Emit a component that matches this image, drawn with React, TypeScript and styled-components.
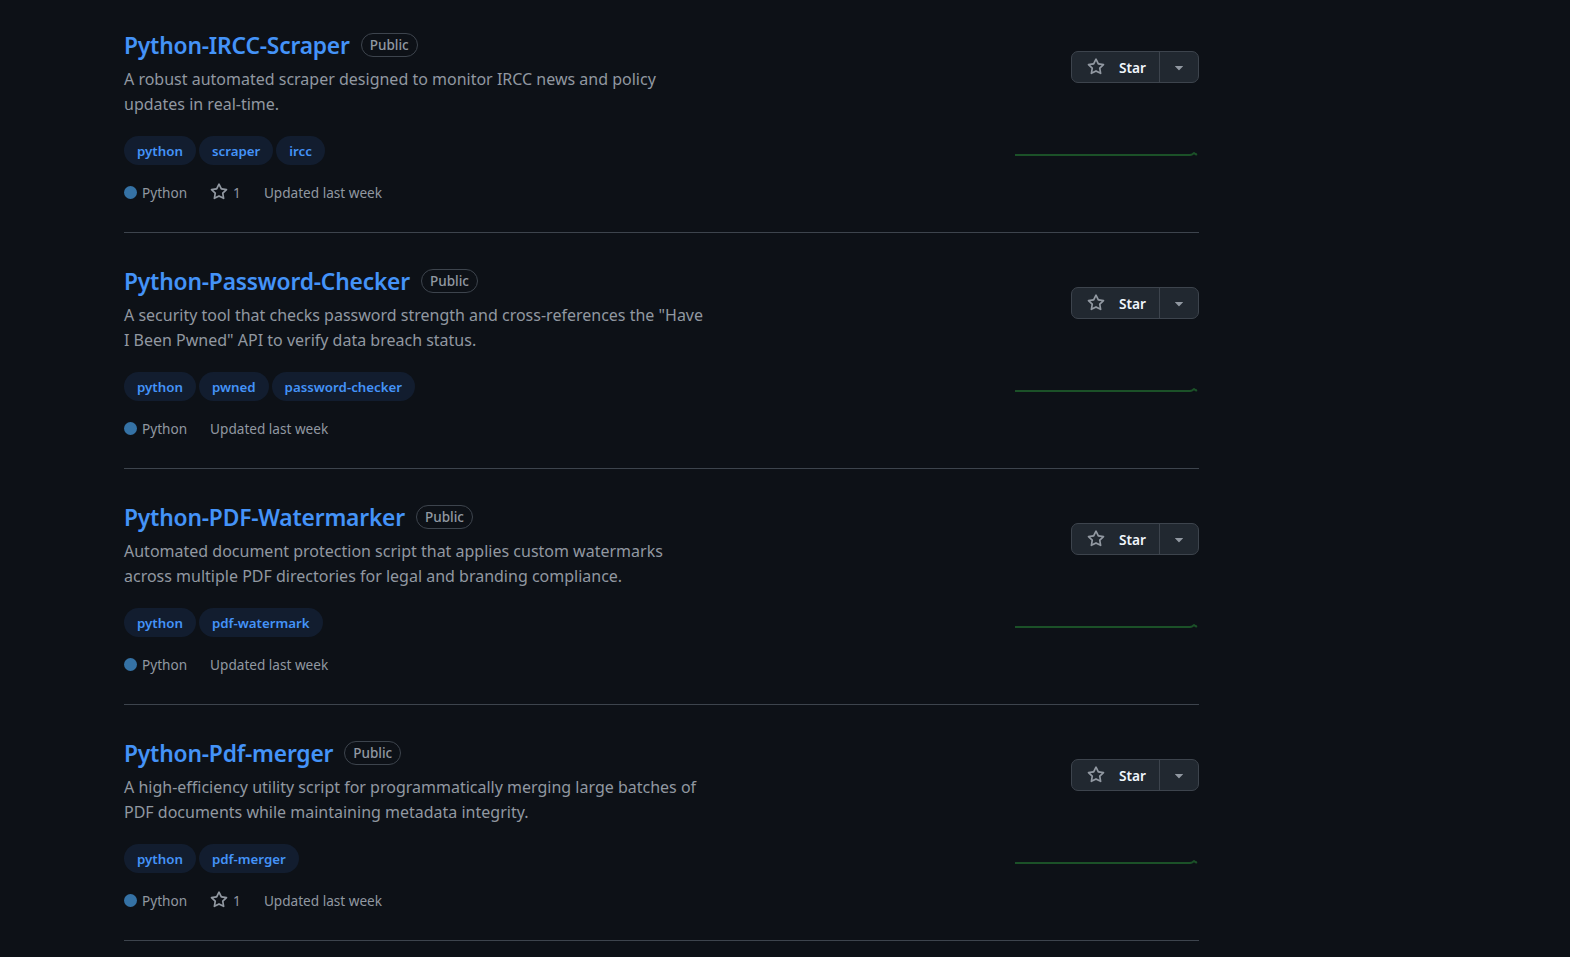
import React from 'react'
import styled, { createGlobalStyle } from 'styled-components'

const GlobalStyle = createGlobalStyle`
  html, body {
    margin: 0;
    padding: 0;
    background: #0d1117;
  }
  body {
    font-family: "Segoe UI", "Noto Sans", sans-serif;
    color: #f0f6fc;
    overflow: hidden;
  }
`

const Page = styled.main`
  min-height: 957px;
  padding-left: 124px;
`

const List = styled.ul`
  list-style: none;
  margin: 0;
  padding: 0;
  width: 1075px;
`

const Item = styled.li`
  display: flex;
  justify-content: space-between;
  padding: 31px 0 30px;
  border-bottom: 1px solid #3d444d;

  &:first-child {
    padding-top: 28px;
  }
`

const Main = styled.div`
  display: flex;
  flex-direction: column;
  width: 894px;
`

const TitleRow = styled.div`
  display: flex;
  align-items: center;
  height: 34px;
  gap: 11px;
`

const Title = styled.a`
  font-size: 22.8px;
  font-weight: 600;
  color: #4493f8;
  text-decoration: none;
  letter-spacing: -0.2px;
`

const Badge = styled.span`
  display: inline-flex;
  align-items: center;
  height: 22px;
  padding: 0 8px;
  border: 1px solid #3d444d;
  border-radius: 12px;
  font-size: 13.5px;
  font-weight: 500;
  color: #9198a1;
`

const Description = styled.p`
  margin: 4.5px 0 0;
  max-width: 584px;
  font-size: 16px;
  line-height: 25px;
  color: #9198a1;
`

const Topics = styled.div`
  display: flex;
  gap: 3px;
  margin-top: 19.5px;
`

const Topic = styled.a`
  display: inline-flex;
  align-items: center;
  height: 29px;
  padding: 0 13px;
  border-radius: 15px;
  background: #121d2f;
  color: #4493f8;
  font-size: 13.3px;
  font-weight: 600;
  text-decoration: none;
`

const Meta = styled.div`
  display: flex;
  align-items: center;
  height: 20px;
  margin-top: 17px;
  font-size: 13.6px;
  color: #9198a1;
`

const MetaEntry = styled.span`
  display: inline-flex;
  align-items: center;
  gap: 5px;
  margin-right: 23px;
`

const LangDot = styled.span<{ $color: string }>`
  width: 13px;
  height: 13px;
  border-radius: 50%;
  background: ${p => p.$color};
`

const Side = styled.div`
  display: flex;
  flex-direction: column;
  align-items: flex-end;
  padding-top: 23px;
`

const StarGroup = styled.div`
  display: flex;
  height: 32px;
  border: 1px solid #3d444d;
  border-radius: 7px;
  background: #212830;
  overflow: hidden;
  box-sizing: border-box;
`

const StarButton = styled.button`
  display: flex;
  align-items: center;
  gap: 14px;
  width: 88px;
  padding: 0 0 0 15px;
  border: 0;
  border-right: 1px solid #3d444d;
  background: transparent;
  color: #f0f6fc;
  font-family: inherit;
  font-size: 13.7px;
  font-weight: 600;
`

const StarGlyph = styled.span`
  display: flex;
  color: #9198a1;
`

const CaretButton = styled.button`
  display: flex;
  align-items: center;
  justify-content: center;
  width: 38px;
  border: 0;
  background: transparent;
  color: #9198a1;
`

const Spark = styled.svg`
  margin-top: 42px;
  margin-right: 1px;
  display: block;
`

const StarIcon = ({ size = 18 }: { size?: number }) => (
  <svg width={size} height={size} viewBox="0 0 16 16" fill="currentColor">
    <path d="M8 .25a.75.75 0 0 1 .673.418l1.882 3.815 4.21.612a.75.75 0 0 1 .416 1.279l-3.046 2.97.719 4.192a.751.751 0 0 1-1.088.791L8 12.347l-3.766 1.98a.75.75 0 0 1-1.088-.79l.72-4.194L.818 6.374a.75.75 0 0 1 .416-1.28l4.21-.611L7.327.668A.75.75 0 0 1 8 .25Zm0 2.445L6.615 5.5a.75.75 0 0 1-.564.41l-3.097.45 2.24 2.184a.75.75 0 0 1 .216.664l-.528 3.084 2.769-1.456a.75.75 0 0 1 .698 0l2.77 1.456-.53-3.084a.75.75 0 0 1 .216-.664l2.24-2.183-3.096-.45a.75.75 0 0 1-.564-.41L8 2.694Z" />
  </svg>
)

const Caret = () => (
  <svg width={18} height={18} viewBox="0 0 16 16" fill="currentColor">
    <path d="m4.427 7.427 3.396 3.396a.25.25 0 0 0 .354 0l3.396-3.396A.25.25 0 0 0 11.396 7H4.604a.25.25 0 0 0-.177.427Z" />
  </svg>
)

// flat weekly activity with a small blip at the end
const Sparkline = () => (
  <Spark width={184} height={32} viewBox="0 0 184 32">
    <path
      d="M1 30 L176 30 L178 29.5 L180 28 L182 29.5 L183 29"
      fill="none"
      stroke="#1b5128"
      strokeWidth={2}
      strokeLinejoin="round"
    />
  </Spark>
)

type Repo = {
  name: string
  description: string
  topics: string[]
  stars?: number
}

const repos: Repo[] = [
  {
    name: 'Python-IRCC-Scraper',
    description: 'A robust automated scraper designed to monitor IRCC news and policy updates in real-time.',
    topics: ['python', 'scraper', 'ircc'],
    stars: 1,
  },
  {
    name: 'Python-Password-Checker',
    description: 'A security tool that checks password strength and cross-references the "Have I Been Pwned" API to verify data breach status.',
    topics: ['python', 'pwned', 'password-checker'],
  },
  {
    name: 'Python-PDF-Watermarker',
    description: 'Automated document protection script that applies custom watermarks across multiple PDF directories for legal and branding compliance.',
    topics: ['python', 'pdf-watermark'],
  },
  {
    name: 'Python-Pdf-merger',
    description: 'A high-efficiency utility script for programmatically merging large batches of PDF documents while maintaining metadata integrity.',
    topics: ['python', 'pdf-merger'],
    stars: 1,
  },
]

export default function App() {
  return (
    <Page>
      <GlobalStyle />
      <List>
        {repos.map(repo => (
          <Item key={repo.name}>
            <Main>
              <TitleRow>
                <Title href="#">{repo.name}</Title>
                <Badge>Public</Badge>
              </TitleRow>
              <Description>{repo.description}</Description>
              <Topics>
                {repo.topics.map(t => (
                  <Topic key={t} href="#">{t}</Topic>
                ))}
              </Topics>
              <Meta>
                <MetaEntry>
                  <LangDot $color="#3572a5" />
                  Python
                </MetaEntry>
                {repo.stars && (
                  <MetaEntry>
                    <StarIcon />
                    {repo.stars}
                  </MetaEntry>
                )}
                <MetaEntry>Updated last week</MetaEntry>
              </Meta>
            </Main>
            <Side>
              <StarGroup>
                <StarButton>
                  <StarGlyph>
                    <StarIcon />
                  </StarGlyph>
                  Star
                </StarButton>
                <CaretButton>
                  <Caret />
                </CaretButton>
              </StarGroup>
              <Sparkline />
            </Side>
          </Item>
        ))}
      </List>
    </Page>
  )
}
